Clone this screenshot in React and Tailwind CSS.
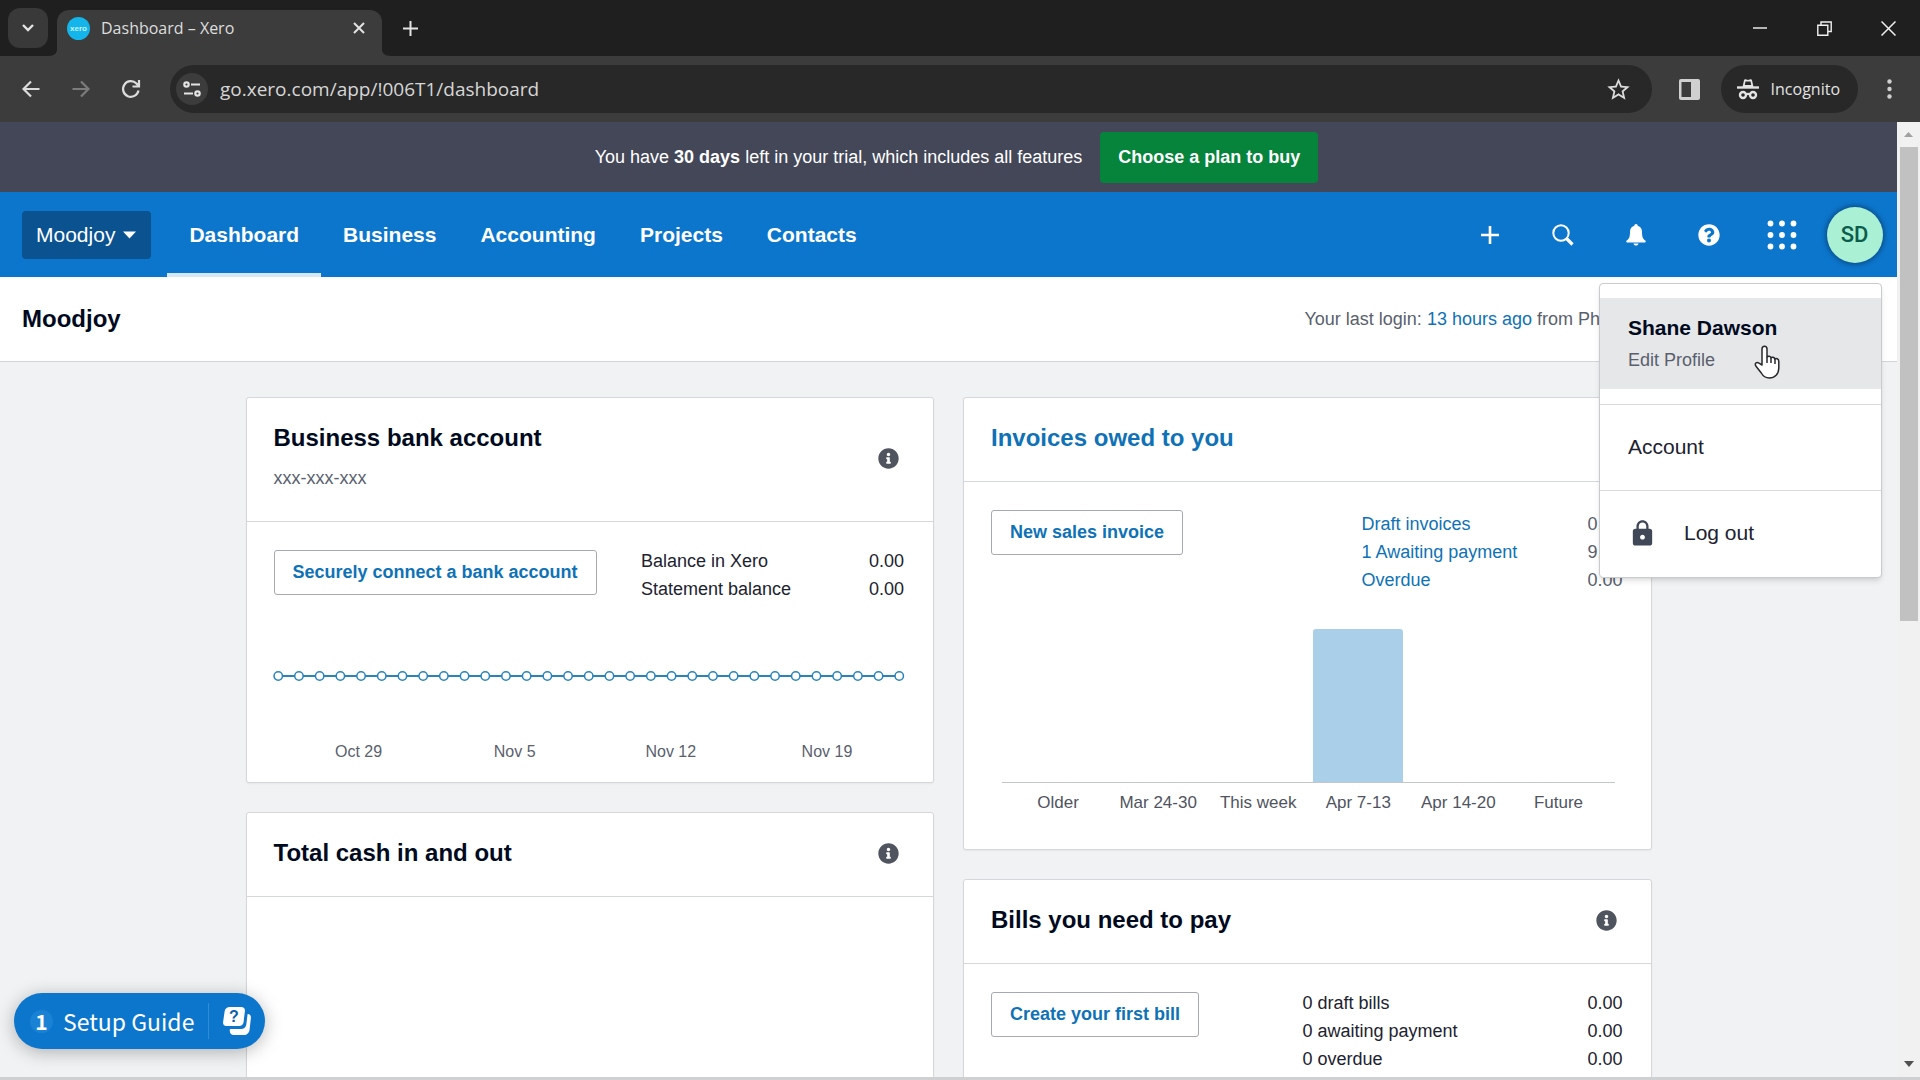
import React from "react";
import { FaInfoCircle, FaQuestionCircle } from "react-icons/fa";
import { MdLock, MdStarBorder } from "react-icons/md";

const POINTS = Array.from({ length: 31 }, (_, i) => 5 + i * 20.7);
const DAYS = ["Oct 29", "Nov 5", "Nov 12", "Nov 19"];
const WEEKS = [
  { label: "Older", value: 0 },
  { label: "Mar 24-30", value: 0 },
  { label: "This week", value: 0 },
  { label: "Apr 7-13", value: 100 },
  { label: "Apr 14-20", value: 0 },
  { label: "Future", value: 0 },
];

function IncognitoIcon() {
  return (
    <svg width="22" height="22" viewBox="0 0 22 22" fill="none" stroke="#e3e3e3" strokeWidth="2">
      <path d="M5.500 9 7 2.200c.2-.9.8-1.200 1.600-1L11 1.900l2.400-.7c.8-.2 1.400.1 1.600 1L16.500 9z" fill="#e3e3e3" stroke="none" />
      <path d="M8.500 3.600h5L14.200 7H7.800z" fill="#282828" stroke="none" />
      <path d="M0 9.500h22" strokeWidth="2.400" />
      <circle cx="6" cy="17" r="3" strokeWidth="2.400" />
      <circle cx="16" cy="17" r="3" strokeWidth="2.400" />
      <path d="M9 16.500c1.300-.8 2.700-.8 4 0" />
    </svg>
  );
}

function TabStrip() {
  return (
    <div className="flex h-14 items-end bg-[#1f1f1f] text-[#dedede]">
      <button aria-label="Search tabs" className="mb-2 ml-2 flex size-10 items-center justify-center rounded-xl bg-[#393939]">
        <svg width="12" height="8" viewBox="0 0 12 8" fill="none" stroke="#e3e3e3" strokeWidth="2.400"><path d="m1 1 5 5 5-5" /></svg>
      </button>
      <svg className="-mr-px" width="10" height="10" viewBox="0 0 10 10"><path d="M10 0v10H0Q10 10 10 0" fill="#3c3c3c" /></svg>
      <div className="flex h-[46px] w-[325px] items-center rounded-t-xl bg-[#3c3c3c] pb-2.5 pl-2.5 pr-[11px]">
        <svg width="23" height="23" viewBox="0 0 23 23" aria-label="Xero">
          <circle cx="11.500" cy="11.500" r="11.500" fill="#13b5ea" />
          <text x="11.500" y="14" textAnchor="middle" fontSize="8" fontWeight="bold" fill="#c9f1fb" fontFamily="Liberation Sans, sans-serif">xero</text>
        </svg>
        <span className="ml-[11px] flex-1 whitespace-nowrap font-['Open_Sans',sans-serif] text-[16px] leading-6">Dashboard – Xero</span>
        <button aria-label="Close tab" className="flex size-6 items-center justify-center">
          <svg width="12" height="12" viewBox="0 0 12 12" stroke="#e3e3e3" strokeWidth="2"><path d="m1 1 10 10M11 1 1 11" /></svg>
        </button>
      </div>
      <svg className="-ml-px" width="10" height="10" viewBox="0 0 10 10"><path d="M0 0v10h10Q0 10 0 0" fill="#3c3c3c" /></svg>
      <button aria-label="New tab" className="mb-4 ml-[7px] flex size-6 items-center justify-center">
        <svg width="15" height="15" viewBox="0 0 15 15" stroke="#e3e3e3" strokeWidth="2"><path d="M7.500 0v15M0 7.500h15" /></svg>
      </button>
      <div className="mb-4 ml-auto flex">
        <button aria-label="Minimize" className="flex h-6 w-16 items-center justify-center">
          <svg width="14" height="2" viewBox="0 0 14 2"><path d="M0 1h14" stroke="#e8e8e8" strokeWidth="1.500" /></svg>
        </button>
        <button aria-label="Restore" className="flex h-6 w-16 items-center justify-center">
          <svg width="15" height="15" viewBox="0 0 15 15" fill="none" stroke="#f0f0f0" strokeWidth="1.400"><path d="M.8 4.200h10v10h-10zM4 4V1h10.200v9.500H11" /></svg>
        </button>
        <button aria-label="Close" className="flex h-6 w-16 items-center justify-center">
          <svg width="15" height="15" viewBox="0 0 15 15" stroke="#f0f0f0" strokeWidth="1.500"><path d="m.5.5 14 14m0-14-14 14" /></svg>
        </button>
      </div>
    </div>
  );
}

function Toolbar() {
  return (
    <div className="flex h-[66px] items-center bg-[#3c3c3c] font-['Open_Sans',sans-serif] text-[#e3e3e3]">
      <button aria-label="Back" className="ml-1.5 flex h-10 w-[50px] items-center justify-center">
        <svg width="18" height="18" viewBox="0 0 18 18" fill="none" stroke="#dcdcdc" strokeWidth="2.200"><path d="M17.500 9H2M9 1.500 1.500 9 9 16.500" /></svg>
      </button>
      <button aria-label="Forward" className="flex h-10 w-[50px] items-center justify-center">
        <svg width="18" height="18" viewBox="0 0 18 18" fill="none" stroke="#7c7c7c" strokeWidth="2.200"><path d="M.5 9H16M9 1.500 16.500 9 9 16.500" /></svg>
      </button>
      <button aria-label="Reload" className="flex h-10 w-[50px] items-center justify-center">
        <svg width="20" height="20" viewBox="0 0 20 20" fill="none" stroke="#dcdcdc" strokeWidth="2.200"><path d="M17.500 11.500A7.800 7.800 0 1 1 15.500 4.600L18 7M18 1v6.500h-6.500" /></svg>
      </button>
      <div className="ml-3.5 flex h-12 flex-1 items-center rounded-full bg-[#282828] pl-1.5 pr-5">
        <button aria-label="View site information" className="flex size-8 items-center justify-center rounded-full bg-[#3c3c3c]">
          <svg width="18" height="16" viewBox="0 0 18 16" fill="none" stroke="#e3e3e3" strokeWidth="2.200"><circle cx="3.500" cy="3.500" r="2.200" /><path d="M8 3.500h9M1 12.500h9" /><circle cx="14.500" cy="12.500" r="2.200" /></svg>
        </button>
        <input aria-label="Address" readOnly value="go.xero.com/app/!006T1/dashboard" className="ml-3 min-w-0 flex-1 bg-transparent text-[19px] leading-7 text-[#d6d6d6] outline-none" />
        <button aria-label="Bookmark"><MdStarBorder size={27} color="#dcdcdc" /></button>
      </div>
      <button aria-label="Side panel" className="ml-[27px]">
        <svg width="21" height="21" viewBox="0 0 21 21"><rect width="21" height="21" rx="2" fill="#d0d0d0" /><path d="M2.500 3H12v15H2.500z" fill="#3c3c3c" /></svg>
      </button>
      <div className="ml-[21px] flex h-12 items-center gap-3 rounded-full bg-[#282828] pl-4 pr-[18px] text-[16px]">
        <IncognitoIcon />
        <span>Incognito</span>
      </div>
      <button aria-label="Menu" className="flex w-[62px] justify-center">
        <svg width="5" height="20" viewBox="0 0 5 20" fill="#d0d0d0"><circle cx="2.500" cy="2.500" r="2.200" /><circle cx="2.500" cy="10" r="2.200" /><circle cx="2.500" cy="17.500" r="2.200" /></svg>
      </button>
    </div>
  );
}

function TrialBanner() {
  return (
    <div className="flex h-[70px] items-center justify-center gap-[18px] bg-[#434758] pl-4 text-[18px] text-white">
      <p>You have <b>30 days</b> left in your trial, which includes all features</p>
      <button className="h-[51px] rounded-sm bg-[#06843c] px-[18px] font-bold">Choose a plan to buy</button>
    </div>
  );
}

function UserMenu() {
  return (
    <div className="absolute right-[15px] top-full z-10 mt-1.5 w-[283px] rounded-sm border border-[#c9cbcf] bg-white text-[21px] text-[#1d2230] shadow-md">
      <a href="#profile" className="mb-[15px] mt-[14px] block bg-[#e6e7e9] px-[28px] pb-3 pt-[13px] leading-[33px]">
        <b className="block text-[#000a1e]">Shane Dawson</b>
        <span className="block text-[18px] text-[#5a5f6e]">Edit Profile</span>
      </a>
      <a href="#account" className="block border-t border-[#d8dadd] px-[28px] pb-[27px] pt-[26px] leading-8">Account</a>
      <a href="#logout" className="flex items-center gap-[27px] border-t border-[#d8dadd] px-[28px] pb-7 pt-[26px] leading-8">
        <MdLock size={29} color="#404756" />
        Log out
      </a>
      <svg className="absolute left-[154px] top-[61px]" width="26" height="34" viewBox="0 0 26 34" fill="white" stroke="#26282c" strokeWidth="1.500" strokeLinejoin="round">
        <path d="M8 20V4c0-3.800 5-3.800 5 0v8c.8-1.300 3.600-1 4 .8 1-1 3.400-.6 3.800 1.200 1-1 4-.4 4 2.400V23c0 6-4 10-9.500 10-4 0-6.300-2-8-5L1.800 21c-1.600-3 1.300-4.400 3.200-2.800z" />
        <path d="M13 12v6M17 13v5M21 14v5" />
      </svg>
    </div>
  );
}

const cell = "flex h-14 w-[73px] items-center justify-center";

function NavBar() {
  return (
    <header className="relative flex h-[85px] items-stretch bg-[#0c76cc] text-[21px] text-white">
      <button className="my-auto ml-[22px] mr-4 flex h-12 items-center gap-2 rounded-sm bg-[#0a5290] pl-[14px] pr-[15px]">
        Moodjoy
        <svg width="13" height="8" viewBox="0 0 13 8" fill="white"><path d="M0 .5h13L6.500 7.500z" /></svg>
      </button>
      <nav className="flex font-bold">
        <a href="#dashboard" className="flex items-center border-y-4 border-t-transparent border-b-[#d6e8f7] px-[22px]">Dashboard</a>
        <a href="#business" className="flex items-center px-[22px]">Business</a>
        <a href="#accounting" className="flex items-center px-[22px]">Accounting</a>
        <a href="#projects" className="flex items-center px-[22px]">Projects</a>
        <a href="#contacts" className="flex items-center px-[22px]">Contacts</a>
      </nav>
      <div className="ml-auto mr-1.5 flex items-center">
        <button aria-label="Create new" className={cell}>
          <svg width="18" height="18" viewBox="0 0 18 18" stroke="white" strokeWidth="2.600"><path d="M9 0v18M0 9h18" /></svg>
        </button>
        <button aria-label="Search" className={cell}>
          <svg width="22" height="22" viewBox="0 0 22 22" fill="none" stroke="white"><circle cx="9" cy="9" r="7.700" strokeWidth="2" /><path d="m14.500 14.500 6 6" strokeWidth="3.200" /></svg>
        </button>
        <button aria-label="Notifications" className={cell}>
          <svg width="20" height="22" viewBox="0 0 20 22" fill="white"><path d="M10 0c1.200 0 1.600.8 1.700 1.700C14.800 2.500 16 5 16 8c0 5 1 7.200 3.300 8.500.6.4.7 2-.3 2H1c-1 0-.9-1.600-.3-2C3 15.200 4 13 4 8c0-3 1.200-5.500 4.300-6.300C8.400.8 8.800 0 10 0M7.500 19.500h5c-.5 2.800-4.500 2.800-5 0" /></svg>
        </button>
        <button aria-label="Help" className={cell}><FaQuestionCircle size={22} /></button>
        <button aria-label="Apps" className={cell}>
          <svg width="30" height="30" viewBox="0 0 30 30" fill="white">
            {[3.5, 15, 26.5].map((y) => [3.5, 15, 26.5].map((x) => <circle key={`${x}-${y}`} cx={x} cy={y} r="2.9" />))}
          </svg>
        </button>
        <div className={cell}>
          <button aria-label="User menu" aria-expanded="true" className="size-14 rounded-full bg-[#a9f0d4] font-['Roboto',sans-serif] text-[22px] font-medium text-[#0b5c4b] shadow-[0_0_4px_2px_#0a5290]">SD</button>
        </div>
      </div>
      <UserMenu />
    </header>
  );
}

function Card({ title, subtitle, link, info, children }) {
  return (
    <section className="rounded-[3px] border border-[#d5d7da] bg-white shadow-xs">
      <div className="flex items-center justify-between border-b border-[#d5d7da] pb-[27px] pl-[27px] pr-[34px] pt-6">
        <div>
          <h2 className="text-[24px] font-bold leading-8 text-[#000a1e]">
            {link ? <a href="#invoices" className="text-[#0f72b6]">{title}</a> : title}
          </h2>
          {subtitle && <p className="mt-2 text-[18px] leading-8 text-[#5a5f6e]">{subtitle}</p>}
        </div>
        {info && <button aria-label={"About " + title}><FaInfoCircle size={21} color="#50545f" /></button>}
      </div>
      {children}
    </section>
  );
}

function ActionButton({ children }) {
  return (
    <button className="h-[45px] self-start whitespace-nowrap rounded-[3px] border border-[#a6a9b0] px-[18px] text-[18px] font-bold text-[#0f72b6]">{children}</button>
  );
}

function Figures({ rows, className, linked }) {
  return (
    <table className={"text-[18px] leading-7 text-[#1d2230] " + className}>
      <tbody>
        {rows.map(([label, amount]) => (
          <tr key={label}>
            <th scope="row" className={"p-0 text-left font-normal " + (linked ? "text-[#0f72b6]" : "")}>
              {linked ? <a href="#invoices">{label}</a> : label}
            </th>
            <td className={"p-0 text-right " + (linked ? "text-[#5a5f6e]" : "")}>{amount}</td>
          </tr>
        ))}
      </tbody>
    </table>
  );
}

function Dashboard() {
  return (
    <main className="mx-auto grid w-full max-w-[1406px] grid-cols-2 items-start gap-[29px] pt-[35px]">
      <div className="flex flex-col gap-[29px]">
        <Card title="Business bank account" subtitle="xxx-xxx-xxx" info>
          <div className="flex items-start justify-between pl-[27px] pr-[29px] pt-7">
            <ActionButton>Securely connect a bank account</ActionButton>
            <Figures className="-mt-[3px] w-[263px]" rows={[["Balance in Xero", "0.00"], ["Statement balance", "0.00"]]} />
          </div>
          <div className="px-[26px] pb-4 pt-[67px]">
            <svg className="w-full" viewBox="0 0 634 12" role="img" aria-label="Account balance">
              <path d="M5 6h621" stroke="#2a84b8" strokeWidth="2" />
              {POINTS.map((x) => <circle key={x} cx={x} cy="6" r="4.2" fill="white" stroke="#2a84b8" strokeWidth="1.500" />)}
            </svg>
            <div className="mt-14 grid grid-cols-4 pl-2 pr-0.5 text-center text-[16px] leading-7 text-[#5a5f6e]">
              {DAYS.map((d) => <span key={d}>{d}</span>)}
            </div>
          </div>
        </Card>
        <Card title="Total cash in and out" info>
          <div className="h-[400px]" />
        </Card>
      </div>
      <div className="flex flex-col gap-[29px]">
        <Card title="Invoices owed to you" link>
          <div className="flex items-start justify-between pl-[27px] pr-7 pt-7">
            <ActionButton>New sales invoice</ActionButton>
            <Figures linked className="w-[261px]" rows={[["Draft invoices", "0.00"], ["1 Awaiting payment", "9.00"], ["Overdue", "0.00"]]} />
          </div>
          <div className="ml-[38px] mr-[36px] pb-8 pt-[35px] text-[#50545f]">
            <div className="grid h-[154px] grid-cols-6 items-end border-b border-[#c4c6ca] px-1.5">
              {WEEKS.map((w) => (
                <div key={w.label} className="mx-[5px] rounded-t-[3px] bg-[#a9cfe9]" style={{ height: `${w.value}%` }} />
              ))}
            </div>
            <div className="mt-1.5 grid grid-cols-6 whitespace-nowrap px-1.5 text-center text-[17px] leading-7">
              {WEEKS.map((w) => <span key={w.label}>{w.label}</span>)}
            </div>
          </div>
        </Card>
        <Card title="Bills you need to pay" info>
          <div className="flex h-[400px] items-start justify-between pl-[27px] pr-7 pt-7">
            <ActionButton>Create your first bill</ActionButton>
            <Figures className="-mt-[3px] w-[320px]" rows={[["0 draft bills", "0.00"], ["0 awaiting payment", "0.00"], ["0 overdue", "0.00"]]} />
          </div>
        </Card>
      </div>
    </main>
  );
}

function ScrollBar() {
  return (
    <div className="flex w-[23px] flex-none flex-col items-center bg-[#f1f1f1]">
      <svg className="my-2.5" width="9" height="5" viewBox="0 0 9 5"><path d="M0 5 4.500 0 9 5z" fill="#a0a0a0" /></svg>
      <div className="h-[474px] w-[18px] bg-[#c1c1c1]" />
      <svg className="mb-2.5 mt-auto" width="10" height="6" viewBox="0 0 10 6"><path d="m0 0 5 6 5-6z" fill="#505050" /></svg>
    </div>
  );
}

function SetupGuide() {
  return (
    <button className="absolute bottom-[28px] left-[14px] z-10 flex h-14 items-center rounded-full bg-[#0c76cc] pl-4 pr-[14px] font-['Noto_Sans_CJK_SC',sans-serif] text-white shadow-[0_3px_18px_rgba(0,0,0,0.28)]">
      <span className="flex size-[23px] items-center justify-center rounded-full bg-[#1a82d4] text-[21px] font-bold leading-6">1</span>
      <span className="ml-[10px] text-[23px] leading-8">Setup Guide</span>
      <span className="mx-[14px] h-9 w-px bg-[#2f8cd8]" />
      <svg width="28" height="28" viewBox="0 0 28 28" fill="white">
        <path d="M7 0h11c3 0 4.200 1.600 3.900 4L20.600 15c-.4 2.700-2 4-4.600 4H3.500C1 19-.2 17.300.1 15L1.600 4.500C2 1.500 4 0 7 0" />
        <path d="M24.600 7c2.400.2 3.500 1.600 3.300 4l-1.300 11.500c-.4 3.500-2.600 5.500-6 5.500H11c-2.600 0-4.200-1.400-4.300-4.500 0-1 .3-1.500 1-1.500H18c3 0 5-1.800 5.300-4.500z" />
        <text x="11" y="15" textAnchor="middle" fontSize="16" fontWeight="bold" fontFamily="Liberation Sans, sans-serif" fill="#0c60ac">?</text>
      </svg>
    </button>
  );
}

export default function App() {
  return (
    <div className="flex h-screen flex-col overflow-hidden bg-[#f1f2f4] font-['Liberation_Sans',sans-serif]">
      <TabStrip />
      <Toolbar />
      <div className="relative flex min-h-0 flex-1">
        <div className="flex min-w-0 flex-1 flex-col overflow-hidden">
          <TrialBanner />
          <NavBar />
          <div className="flex h-[85px] flex-none items-center border-b border-[#d3d5d8] bg-white pl-[22px]">
            <h1 className="text-[24px] font-bold text-[#000a1e]">Moodjoy</h1>
            <p className="ml-auto mr-[297px] whitespace-nowrap text-[18px] text-[#5a5f6e]">
              Your last login: <a href="#history" className="text-[#0f72b6]">13 hours ago</a> from Ph
            </p>
          </div>
          <div className="min-h-0 flex-1 overflow-hidden">
            <Dashboard />
          </div>
        </div>
        <ScrollBar />
        <SetupGuide />
      </div>
      <div className="h-[3px] flex-none bg-[#cfd0d2]" />
    </div>
  );
}
